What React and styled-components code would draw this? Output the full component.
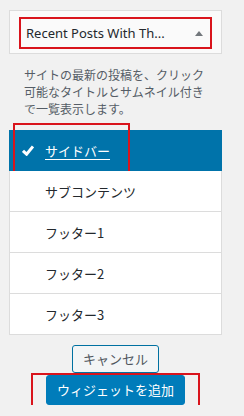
import React from "react";
import styled, { createGlobalStyle } from "styled-components";

const GlobalStyle = createGlobalStyle`
  html, body { margin: 0; padding: 0; }
  body {
    background: #f1f1f1;
    font-family: "Noto Sans CJK JP", "Noto Sans", sans-serif;
    color: #23282d;
  }
`;

const Panel = styled.div`
  width: 213px;
  margin-left: 9px;
  padding-top: 10px;
`;

const WidgetTop = styled.div`
  border: 1px solid #dcdcdc;
  background: #fafafa;
  padding: 6px 9px 4px 9px;
`;

const TitleBox = styled.div`
  box-sizing: border-box;
  height: 32px;
  border: 2px solid #d9141c;
  display: flex;
  align-items: center;
  justify-content: space-between;
  padding: 0 7px 0 5px;
`;

const Title = styled.span`
  font-family: "Noto Sans", sans-serif;
  font-size: 13px;
  color: #23282d;
  white-space: nowrap;
`;

const Arrow = styled.span`
  width: 0;
  height: 0;
  border-left: 4px solid transparent;
  border-right: 4px solid transparent;
  border-bottom: 5px solid #72777c;
`;

const Description = styled.p`
  margin: 12px 0 13px;
  padding: 0 15px;
  height: 51px;
  font-size: 12px;
  line-height: 17px;
  color: #555d66;
`;

const List = styled.ul`
  list-style: none;
  margin: 0;
  padding: 0;
`;

const Row = styled.li`
  position: relative;
  box-sizing: border-box;
  height: 41px;
  display: flex;
  align-items: center;
  padding-left: ${(p) => (p.$selected ? "12px" : "35px")};
  font-size: 13px;
  background: ${(p) => (p.$selected ? "#0073aa" : "#fff")};
  color: ${(p) => (p.$selected ? "#fff" : "#23282d")};
  border: 1px solid ${(p) => (p.$selected ? "#0073aa" : "#dcdcdc")};
  border-top: none;
`;

const RowLabel = styled.span`
  text-decoration: ${(p) => (p.$selected ? "underline" : "none")};
  text-underline-offset: 3px;
`;

const Check = styled.svg`
  width: 12px;
  height: 11px;
  margin-right: 11px;
  flex: none;
`;

const Highlight = styled.span`
  position: absolute;
  top: -7px;
  left: 3px;
  width: 117px;
  height: 52px;
  box-sizing: border-box;
  border: 2px solid #d9141c;
  pointer-events: none;
`;

const Actions = styled.div`
  display: flex;
  flex-direction: column;
  align-items: center;
  margin-top: 10px;
`;

const CancelButton = styled.button`
  display: block;
  box-sizing: border-box;
  height: 28px;
  margin: 0 0 2px;
  padding: 0 10px;
  font-family: inherit;
  font-size: 13px;
  line-height: 26px;
  color: #50575e;
  background: #f3f5f6;
  border: 1px solid #0071a1;
  border-radius: 3px;
`;

const PrimaryWrap = styled.div`
  position: relative;
  display: flex;
  height: 30px;
`;

const PrimaryButton = styled.button`
  display: block;
  box-sizing: border-box;
  height: 30px;
  margin: 0;
  padding: 0 10px;
  font-family: inherit;
  font-size: 13px;
  line-height: 28px;
  color: #fff;
  background: #007cba;
  border: 1px solid #007cba;
  border-radius: 3px;
`;

const ButtonHighlight = styled.span`
  position: absolute;
  top: -2px;
  left: -15px;
  width: 169px;
  height: 38px;
  box-sizing: border-box;
  border: 2px solid #d9141c;
  pointer-events: none;
`;

const areas = ["サイドバー", "サブコンテンツ", "フッター1", "フッター2", "フッター3"];

export default function App() {
  return (
    <>
      <GlobalStyle />
      <Panel>
        <WidgetTop>
          <TitleBox>
            <Title>Recent Posts With Th...</Title>
            <Arrow />
          </TitleBox>
        </WidgetTop>
        <Description>
          サイトの最新の投稿を、クリック可能なタイトルとサムネイル付きで一覧表示します。
        </Description>
        <List>
          {areas.map((a, i) => (
            <Row key={a} $selected={i === 0}>
              {i === 0 && (
                <Check viewBox="0 0 12 11">
                  <path d="M1 5.8 L4.6 9.2 L11 1.4" fill="none" stroke="#fff" strokeWidth="3" strokeLinejoin="miter" />
                </Check>
              )}
              <RowLabel $selected={i === 0}>{a}</RowLabel>
              {i === 0 && <Highlight />}
            </Row>
          ))}
        </List>
        <Actions>
          <CancelButton>キャンセル</CancelButton>
          <PrimaryWrap>
            <PrimaryButton>ウィジェットを追加</PrimaryButton>
            <ButtonHighlight />
          </PrimaryWrap>
        </Actions>
      </Panel>
    </>
  );
}
